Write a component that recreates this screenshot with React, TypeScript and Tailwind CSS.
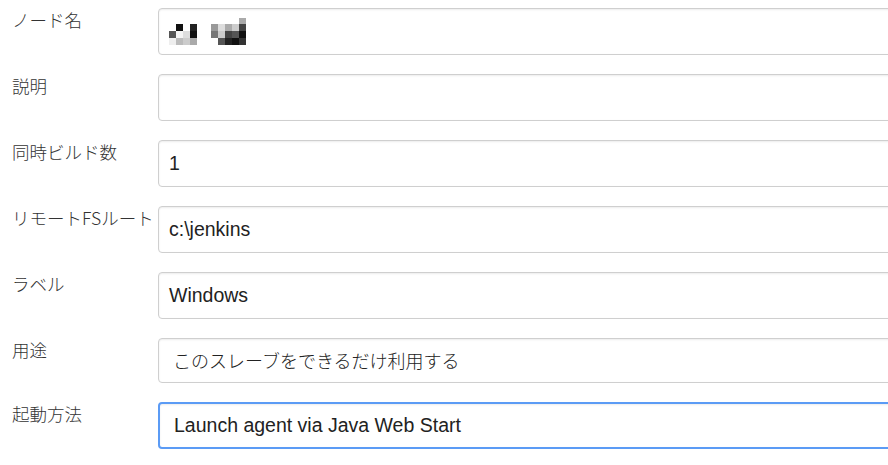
const rows = [
  { label: "ノード名", value: "", mosaic: true },
  { label: "説明", value: "" },
  { label: "同時ビルド数", value: "1" },
  { label: "リモートFSルート", value: "c:\\jenkins" },
  { label: "ラベル", value: "Windows" },
  { label: "用途", value: "このスレーブをできるだけ利用する", select: true },
  { label: "起動方法", value: "Launch agent via Java Web Start", select: true, focused: true },
];

// pixelated (redacted) node name
const cells: [number, number, string][] = [
  [1, 0, "#111"], [3, 0, "#222"],
  [0, 1, "#555"], [1, 1, "#f4f4f4"], [2, 1, "#ddd"], [3, 1, "#111"],
  [0, 2, "#eee"], [1, 2, "#bbb"], [2, 2, "#ccc"], [3, 2, "#aaa"],
  [10, -1, "#aaa"],
  [6, 0, "#999"], [7, 0, "#ddd"], [8, 0, "#aaa"], [9, 0, "#ccc"], [10, 0, "#444"],
  [6, 1, "#777"], [7, 1, "#ccc"], [8, 1, "#444"], [9, 1, "#555"], [10, 1, "#111"],
  [7, 2, "#555"], [8, 2, "#222"], [9, 2, "#111"], [10, 2, "#333"],
];

function Mosaic() {
  return (
    <svg width="80" height="27" viewBox="0 0 80 27">
      {cells.map(([x, y, c], i) => (
        <rect key={i} x={x * 7} y={6 + y * 7} width="7" height="7" fill={c} />
      ))}
    </svg>
  );
}

export default function App() {
  return (
    <div className="w-[888px] h-[465px] overflow-hidden bg-white pt-2 font-['Liberation_Sans','Noto_Sans_CJK_JP',sans-serif]">
      {rows.map((r, i) => (
        <div key={i} className="flex mb-[19px]">
          <div className="w-[158px] shrink-0 pl-3 pt-[1px] text-[17.5px] leading-[22px] text-[#333] font-['Noto_Sans_CJK_JP',sans-serif] font-light">
            {r.label}
          </div>
          <div
            className={
              "w-[760px] shrink-0 rounded-[4px] flex items-center text-[19.5px] text-[#222] shadow-[inset_0_1px_2px_rgba(0,0,0,0.08)] " +
              (r.focused
                ? "h-[47px] border-2 border-[#5b9bf5] pl-[14px]"
                : r.select
                ? "h-[45px] border border-[#cfcfcf] pl-[14px]"
                : "h-[47px] border border-[#cfcfcf] pl-[10px]")
            }
          >
            {r.mosaic ? (
              <Mosaic />
            ) : (
              <span className={r.select && !r.focused ? "font-['Noto_Sans_CJK_JP',sans-serif] font-light text-[18px]" : ""}>
                {r.value}
              </span>
            )}
          </div>
        </div>
      ))}
    </div>
  );
}
